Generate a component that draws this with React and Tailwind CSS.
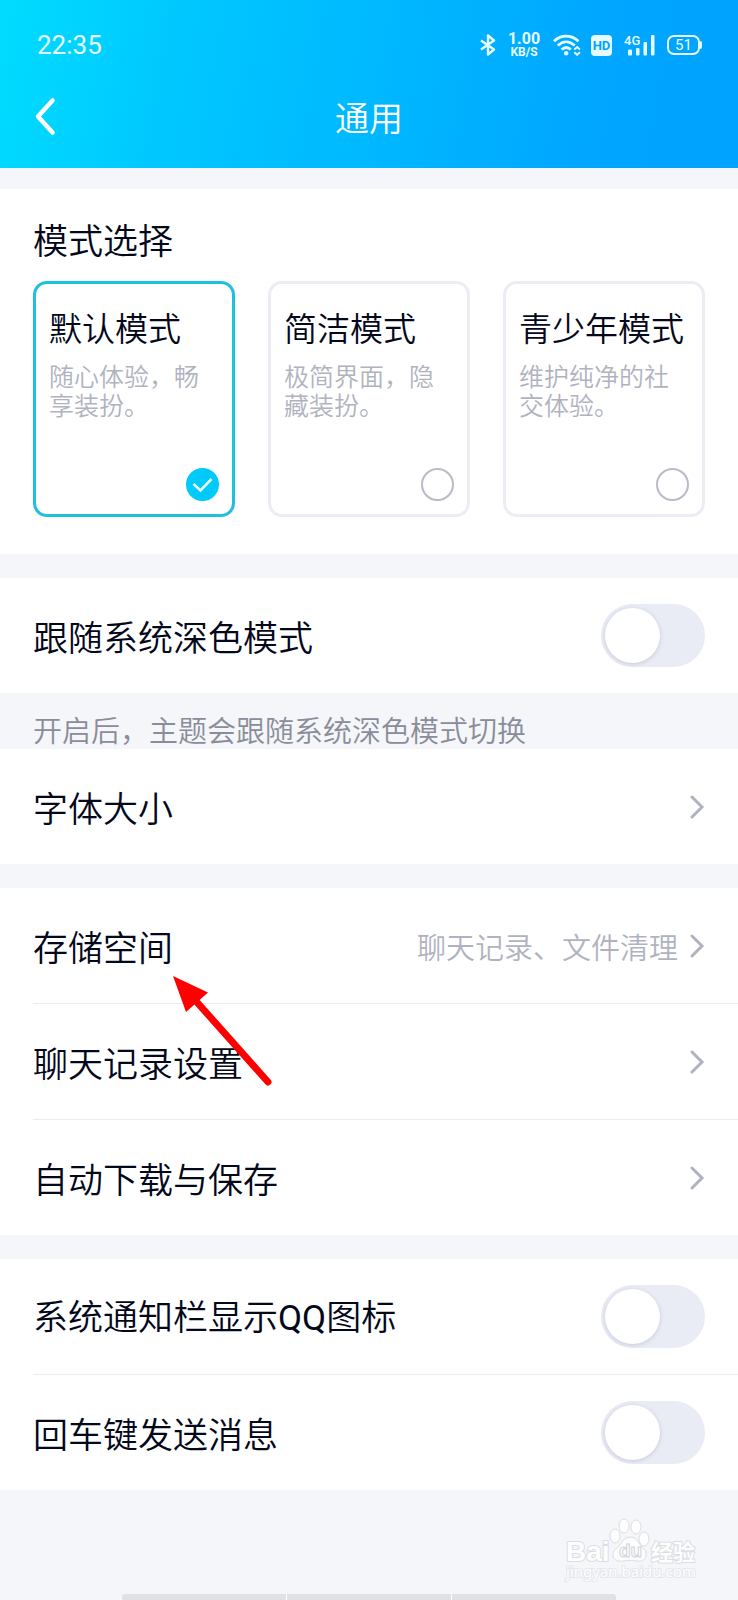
import { useState } from 'react';

const MODES = [
  { id: 'default', name: '默认模式', description: '随心体验，畅享装扮。' },
  { id: 'simple', name: '简洁模式', description: '极简界面，隐藏装扮。' },
  { id: 'teen', name: '青少年模式', description: '维护纯净的社交体验。' },
];

const StatusBar = () => (
  <div className="flex h-[90px] items-center justify-between pl-[37px] pr-[36px] font-['Roboto',sans-serif] text-[#e6fbff]">
    <span className="text-[26px] leading-none">22:35</span>
    <div className="flex items-center">
      {/* Bluetooth */}
      <svg width="16" height="22" viewBox="0 0 16 22" fill="none" stroke="currentColor" strokeWidth="2.4" strokeLinejoin="round">
        <path d="M1 6.500 14 15.500 8 20.500v-19L14 6.500 1 15.500" />
      </svg>
      {/* Network speed */}
      <div className="ml-[11px] flex w-[34px] flex-col items-center font-bold">
        <span className="text-[16px] leading-[14px]">1.00</span>
        <span className="text-[12px] leading-[12px]">KB/S</span>
      </div>
      {/* Wi-Fi */}
      <svg className="ml-[12px]" width="28" height="22" viewBox="0 0 28 22" fill="none" stroke="currentColor" strokeWidth="2.8">
        <path d="M1 7.200C8 .4 18 .4 25.500 7.200" />
        <path d="M4.800 11.600C10 6.500 16.500 6.500 21.700 11.600" />
        <path d="M8.600 15.600C11.500 12.900 15 12.900 17.800 15.600" />
        <circle cx="13.200" cy="19.200" r="2.200" fill="currentColor" stroke="none" />
        <path d="m21.300 15.600 2.800-2.600 2.800 2.600M21.300 18.200l2.800 2.600 2.800-2.600" strokeWidth="2" />
      </svg>
      {/* HD */}
      <span className="ml-[10px] flex h-[21px] w-[21px] items-center justify-center rounded-[4px] bg-[#e6fbff] text-[13px] font-bold leading-none text-[#00a5ff]">
        HD
      </span>
      {/* Mobile signal */}
      <svg className="ml-[12px]" width="31" height="22" viewBox="0 0 31 22" fill="currentColor">
        <text x="0" y="11" fontSize="13" fontWeight="500">4G</text>
        <rect x="4" y="15.500" width="4" height="6" rx="1" />
        <rect x="12" y="14" width="3.500" height="7.500" rx="1" />
        <rect x="19.500" y="8" width="3.500" height="13.500" rx="1" />
        <rect x="27" y="1" width="3.500" height="20.500" rx="1" />
      </svg>
      {/* Battery */}
      <div className="ml-[12px] flex items-center">
        <span className="flex h-[20px] w-[33px] items-center justify-center rounded-[7px] border-2 border-[#e6fbff] text-[15px] leading-none">
          51
        </span>
        <span className="h-[8px] w-[2px] rounded-r-[2px] bg-[#e6fbff]" />
      </div>
    </div>
  </div>
);

const TitleBar = () => (
  <div className="grid h-[78px] grid-cols-[1fr_auto_1fr] items-start px-[33px] text-white">
    <button type="button" aria-label="返回" className="w-[30px] pt-[7px]">
      <svg width="24" height="40" viewBox="0 0 24 40" fill="none" stroke="currentColor" strokeWidth="4.500" strokeLinecap="round" strokeLinejoin="round">
        <path d="M19.500 3.500 5 19.500l14.500 16" />
      </svg>
    </button>
    <h1 className="pt-[3px] text-[34px] font-[350] leading-[48px]">通用</h1>
  </div>
);

const ModeCard = ({ mode, selected, onSelect }) => (
  <label
    className={`flex h-[236px] flex-1 flex-col rounded-[14px] border-3 p-[13px] ${
      selected ? 'border-[#1fbfe0]' : 'border-[#ebedf3]'
    }`}
  >
    <span className="mt-[8px] whitespace-nowrap text-[33px] leading-[44px]">{mode.name}</span>
    <span className="mt-[12px] text-[25px] leading-[29px] text-[#b0b3bf]">{mode.description}</span>
    <span className="mt-auto grid self-end">
      <input
        type="radio"
        name="mode"
        checked={selected}
        onChange={onSelect}
        className="col-start-1 row-start-1 h-[33px] w-[33px] appearance-none rounded-full border-2 border-[#b9bbc5] checked:border-[#00cafc] checked:bg-[#00cafc]"
      />
      {selected && (
        <svg className="pointer-events-none col-start-1 row-start-1" width="33" height="33" viewBox="0 0 33 33" fill="none" stroke="#e6fbff" strokeWidth="2.600">
          <path d="m7.500 16 7 6.500L25.500 11" />
        </svg>
      )}
    </span>
  </label>
);

const Chevron = () => (
  <svg className="shrink-0" width="15" height="24" viewBox="0 0 15 24" fill="none" stroke="#b0b3bf" strokeWidth="3" strokeLinecap="round">
    <path d="m2 2 10 10L2 22" />
  </svg>
);

const Group = ({ children }) => (
  <section className="divide-y divide-[#ebecf0] bg-white pl-[33px]">{children}</section>
);

const LinkRow = ({ label, value }) => (
  <button type="button" className="flex w-full items-center justify-between py-[32px] pr-[33px] text-left">
    <span className="text-[35px] leading-[51px]">{label}</span>
    <span className="flex items-center gap-[12px] text-[29px] leading-[40px] text-[#b0b3bf]">
      {value}
      <Chevron />
    </span>
  </button>
);

const SwitchRow = ({ label }) => {
  const [enabled, setEnabled] = useState(false);

  return (
    <label className="flex items-center justify-between py-[26px] pr-[33px]">
      <span className="text-[35px] leading-[51px]">{label}</span>
      <input
        type="checkbox"
        role="switch"
        checked={enabled}
        onChange={() => setEnabled(!enabled)}
        className="flex h-[63px] w-[104px] appearance-none items-center rounded-full bg-[#e9ebf5] px-[4px] before:h-[55px] before:w-[55px] before:rounded-full before:bg-white before:shadow-[0_1px_4px_rgba(120,125,150,0.3)] checked:justify-end checked:bg-[#00cafc]"
      />
    </label>
  );
};

const Arrow = () => (
  <svg className="pointer-events-none absolute left-[173px] top-[88px]" width="100" height="112" viewBox="0 0 100 112">
    <path d="M22 24 95 106" stroke="#fe0000" strokeWidth="7" strokeLinecap="round" />
    <path d="M0 0 35 16.500 13 36Z" fill="#fe0000" />
  </svg>
);

const Watermark = () => (
  <svg width="138" height="68" viewBox="0 0 138 68" fill="#fdfdfe" stroke="#dcdde2" strokeWidth="1">
    <g fontWeight="700" strokeWidth="2" paintOrder="stroke">
      <text x="2" y="43" fontFamily="'Liberation Sans', sans-serif" fontSize="28">Bai</text>
      <text x="87" y="42" fontFamily="'Noto Sans CJK SC', sans-serif" fontSize="22">经验</text>
    </g>
    <ellipse cx="51" cy="18" rx="5" ry="7" />
    <ellipse cx="60" cy="8" rx="5" ry="7" />
    <ellipse cx="72" cy="9" rx="5" ry="7" />
    <ellipse cx="80" cy="21" rx="5" ry="7" />
    <path d="M66 19c6 0 8 5 11 9 3 3 6 5 5 10-1 4-5 6-9 5-5-1-9-1-14 0-5 1-10-1-10-6 0-4 3-6 6-9s5-9 11-9Z" />
    <text x="55" y="39" fontFamily="'Liberation Sans', sans-serif" fontSize="19" fontWeight="700" stroke="#d2d3d9">du</text>
    <text x="2" y="59" fontFamily="'Noto Sans', sans-serif" fontSize="15" strokeWidth="2" stroke="#e6e7eb" paintOrder="stroke">jingyan.baidu.com</text>
  </svg>
);

const App = () => {
  const [mode, setMode] = useState('default');

  return (
    <div className="flex min-h-screen flex-col bg-[#f4f6fa] font-['Noto_Sans_CJK_SC',sans-serif] text-[#03081a]">
      <header className="bg-[linear-gradient(100deg,#00dcff_0%,#00c6ff_26%,#00b6ff_55%,#00a6ff_80%,#00a3ff_100%)]">
        <StatusBar />
        <TitleBar />
      </header>

      <main className="mt-[21px] flex flex-col font-[350]">
        <fieldset className="bg-white px-[33px] pb-[37px] pt-[25px]">
          <legend className="float-left w-full text-[35px] leading-[50px]">模式选择</legend>
          <div className="clear-both flex gap-[33px] pt-[17px]">
            {MODES.map((item) => (
              <ModeCard
                key={item.id}
                mode={item}
                selected={mode === item.id}
                onSelect={() => setMode(item.id)}
              />
            ))}
          </div>
        </fieldset>

        <div className="mt-[24px]">
          <Group>
            <SwitchRow label="跟随系统深色模式" />
          </Group>
          <p className="h-[56px] px-[33px] pt-[16px] text-[29px] leading-[40px] text-[#8a8d99]">
            开启后，主题会跟随系统深色模式切换
          </p>
          <Group>
            <LinkRow label="字体大小" />
          </Group>
        </div>

        <div className="relative mt-[24px]">
          <Group>
            <LinkRow label="存储空间" value="聊天记录、文件清理" />
            <LinkRow label="聊天记录设置" />
            <LinkRow label="自动下载与保存" />
          </Group>
          <Arrow />
        </div>

        <div className="mt-[24px]">
          <Group>
            <SwitchRow
              label={
                <>
                  系统通知栏显示<span className="font-['Roboto',sans-serif] font-normal">QQ</span>图标
                </>
              }
            />
            <SwitchRow label="回车键发送消息" />
          </Group>
        </div>
      </main>

      <footer className="mt-auto flex flex-col pt-[28px]">
        <div className="flex justify-end pr-[36px]">
          <Watermark />
        </div>
        {/* Gesture bar */}
        <div className="mx-auto mt-[8px] flex h-[6px] w-[67%] gap-px overflow-hidden rounded-t-[3px] bg-white">
          <span className="flex-1 bg-[#e0e1e5]" />
          <span className="flex-1 bg-[#e0e1e5]" />
          <span className="flex-1 bg-[#e0e1e5]" />
        </div>
      </footer>
    </div>
  );
};

export default App;
